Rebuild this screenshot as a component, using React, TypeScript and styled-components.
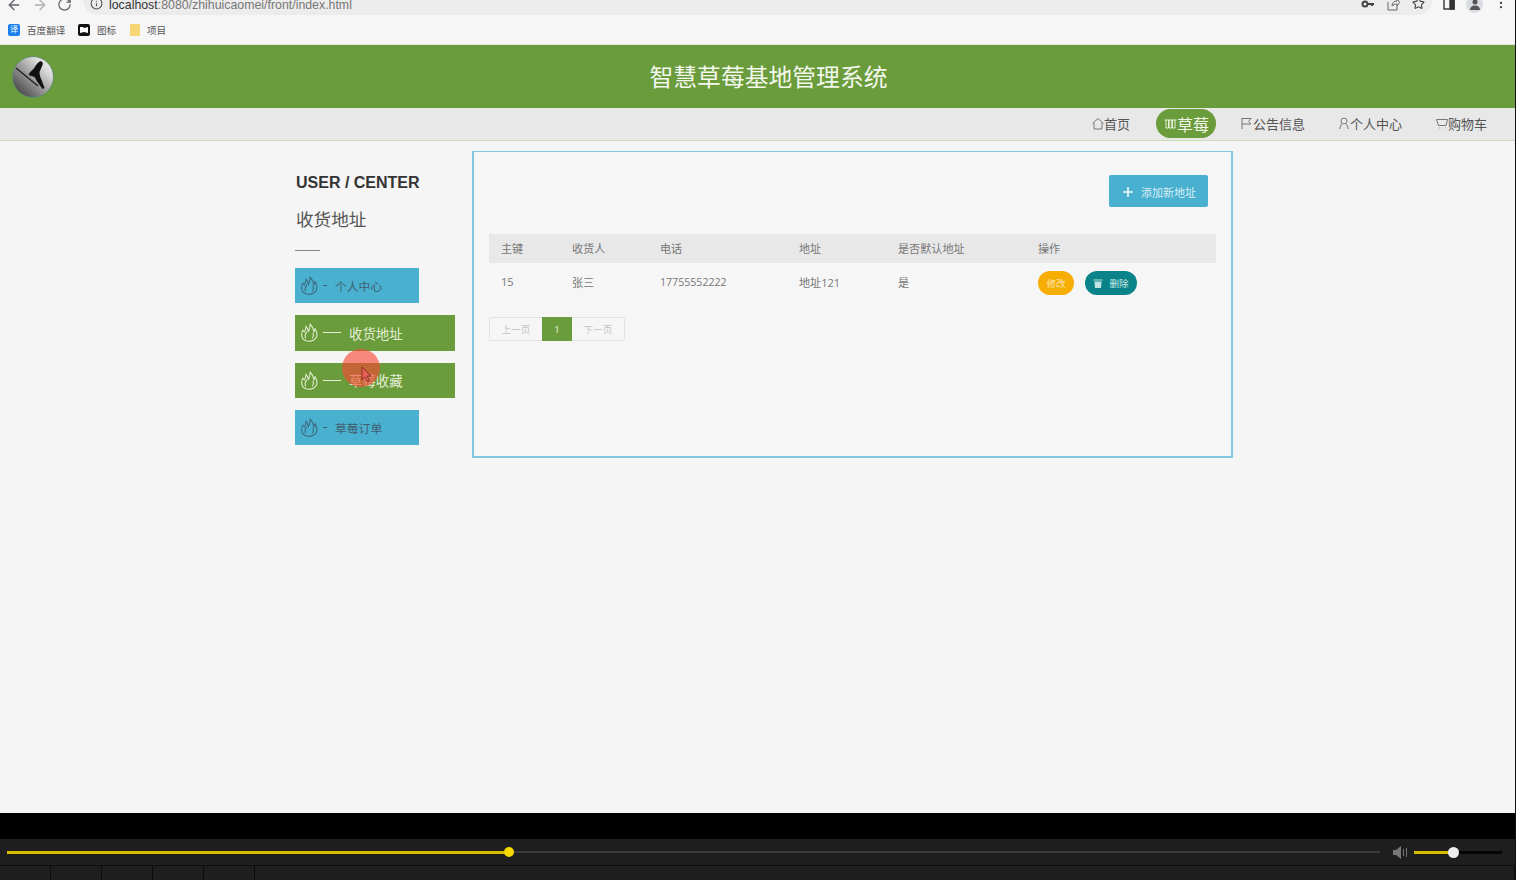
import React from "react";
import styled, { createGlobalStyle } from "styled-components";
import { ArrowLeft, ArrowRight, RotateCw, Info, Star, MoreVertical } from "lucide-react";

const Global = createGlobalStyle`
  html, body { margin: 0; padding: 0; background: #f5f5f5; }
  body { font-family: "Liberation Sans", "Noto Sans CJK SC", sans-serif; }
  * { box-sizing: border-box; }
`;

const Page = styled.div`
  width: 1516px; height: 880px; display: flex; flex-direction: column;
  overflow: hidden; background: #f5f5f5; border-right: 1px solid #111;
  position: relative;
`;
const Chrome = styled.div`height: 45px; background: #f7f6f7; border-bottom: 1px solid #e3e5e0; flex: none;`;
const Toolbar = styled.div`height: 15px; display: flex; overflow: hidden; color: #555;`;
const ToolIcons = styled.div`
  display: flex; width: 83px; flex: none; gap: 9.5px; padding-left: 6px; margin-top: -3px; align-items: flex-start;
  color: #5f6368;
`;
const UrlBar = styled.div`
  width: 1349px; height: 15px; flex: none; background: #ececec; border-radius: 0 0 15px 15px;
  display: flex; align-items: flex-start; padding-left: 7px; overflow: hidden; position: relative;
`;
const UrlText = styled.span`font-size: 12.35px; line-height: 10px; color: #777; margin-left: 6px; white-space: nowrap; b { font-weight: 400; color: #333; }`;
const UrlIcons = styled.div`margin-left: auto; display: flex; gap: 12px; padding-right: 7px; margin-top: -3px; color: #555;`;
const SideIcons = styled.div`display: flex; gap: 11px; margin-left: 11px; margin-top: -4px; color: #444; align-items: flex-start;`;
const Avatar = styled.div`width: 17px; height: 17px; border-radius: 50%; background: #d9dce3; display: flex; justify-content: center; align-items: center;`;

const Bookmarks = styled.div`height: 29px; display: flex; align-items: center; padding-left: 8px;`;
const Bookmark = styled.div<{ $w: number }>`
  width: ${p => p.$w}px; display: flex; align-items: center; gap: 7px; font-size: 9.6px; color: #555; white-space: nowrap;
`;
const BmBlue = styled.span`width: 12px; height: 12px; border-radius: 2px; background: #1b7ff0; color: #fff; font-size: 8px; line-height: 12px; text-align: center;`;

const Header = styled.header`
  height: 63px; flex: none; background: #6a9c3b; display: flex; align-items: center; padding: 0 32px 0 12px;
`;
const Title = styled.h1`
  flex: 1; margin: 0; padding-bottom: 2px; text-align: center; color: #f3f7ee; font-size: 23.8px; font-weight: 400; line-height: 32px;
  font-family: "Noto Sans CJK SC", sans-serif;
`;
const Nav = styled.nav`
  height: 33px; flex: none; background: #e8e8e8; border-bottom: 1px solid #c7dcb0; padding-bottom: 1px;
  display: flex; justify-content: flex-end; align-items: center; padding-right: 28px;
  font-family: "Noto Sans CJK SC", sans-serif;
`;
const NavItem = styled.div<{ $ml: number; $active?: boolean }>`
  margin-left: ${p => p.$ml}px; display: flex; align-items: center; white-space: nowrap;
  font-size: ${p => (p.$active ? 16 : 13)}px; color: ${p => (p.$active ? "#f1f6e9" : "#555")};
  ${p => p.$active && `background:#6a9c3b;border-radius:15px;height:29px;width:60px;padding-left:8px;`}
  svg { flex: none; }
`;

const Main = styled.main`flex: 1; display: flex; align-items: flex-start; padding: 10px 0 0 295px; min-height: 0;`;
const Side = styled.aside`width: 177px; flex: none; padding-top: 22px;`;
const SideHead = styled.div`font-size: 16px; line-height: 19px; font-weight: 700; color: #333; white-space: nowrap; padding-left: 1px;`;
const SideTitle = styled.div`font-size: 17.6px; line-height: 26px; color: #555; margin-top: 14px; padding-left: 1px; font-family: "Noto Sans CJK SC", sans-serif;`;
const SideRule = styled.div`width: 25px; height: 1px; background: #888; margin: 18px 0 17px;`;
const SideMenu = styled.div`display: flex; flex-direction: column; gap: 12px; align-items: flex-start;`;
const SideBtn = styled.div<{ $on?: boolean }>`
  height: 35.33px; width: ${p => (p.$on ? 159.5 : 124)}px; background: ${p => (p.$on ? "#6a9c3b" : "#4ab0cf")};
  color: ${p => (p.$on ? "#e4eed7" : "#3f5f70")}; display: flex; align-items: center; padding-left: 5px;
  font-family: "Noto Sans CJK SC", sans-serif; white-space: nowrap;
  font-size: ${p => (p.$on ? 13.4 : 11.8)}px;
`;
const Dash = styled.span<{ $on?: boolean }>`
  width: ${p => (p.$on ? 18 : 4)}px; height: 1px; background: currentColor; flex: none; margin: 0 8px 0 5px;
`;

const Panel = styled.section`
  width: 761px; height: 307px; flex: none; background: #f6f6f6; border: 2px solid #7fc8e0; border-top-width: 1.5px;
  padding: 23px 15px 0 15px;
`;
const PanelTop = styled.div`display: flex; justify-content: flex-end; padding-right: 8px;`;
const AddBtn = styled.div`
  width: 99px; height: 32px; background: #4ab0cf; border-radius: 2px; color: #d9eff5; display: flex; align-items: center;
  padding: 1px 0 0 13px; gap: 7px; font-size: 11px; font-family: "Noto Sans CJK SC", sans-serif;
`;
const Table = styled.table`
  width: 727px; table-layout: fixed; border-collapse: collapse; margin-top: 27px;
  font-size: 11.1px; color: #777; font-family: "Open Sans", "Noto Sans CJK SC", sans-serif;
`;
const Th = styled.th<{ $w?: number }>`
  ${p => p.$w && `width:${p.$w}px;`} height: 29px; padding: 0 0 2px 12px; background: #e8e8e8; text-align: left; font-weight: 400;
`;
const Td = styled.td`height: 40px; padding: 0 0 3px 12px;`;
const Phone = styled.span`font-size: 10.6px;`;
const Actions = styled.div`display: flex; align-items: center; gap: 11px; margin-top: 2px;`;
const Pill = styled.span<{ $kind: "edit" | "del" }>`
  height: 24px; border-radius: 12px; display: inline-flex; align-items: center; justify-content: center; gap: 6px; font-size: 9.6px;
  width: ${p => (p.$kind === "edit" ? 36 : 52)}px;
  background: ${p => (p.$kind === "edit" ? "#f6ae05" : "#0a8489")};
  color: ${p => (p.$kind === "edit" ? "#fbe6b0" : "#c9e8e6")};
`;
const Pager = styled.div`display: flex; margin-top: 14px; height: 24px; width: 136px;`;
const PageBtn = styled.div<{ $on?: boolean; $w: number; $side?: "l" | "r" }>`
  width: ${p => p.$w}px; display: flex; align-items: center; justify-content: center; font-size: 9.6px;
  font-family: "Open Sans", "Noto Sans CJK SC", sans-serif;
  color: ${p => (p.$on ? "#eef5dc" : "#c4c4c4")}; background: ${p => (p.$on ? "#6a9c3b" : "#f6f6f6")};
  ${p => !p.$on && `border: 1px solid #e4e4e4;`}
  ${p => p.$side === "l" && `border-right: 0; border-radius: 2px 0 0 2px;`}
  ${p => p.$side === "r" && `border-left: 0; border-radius: 0 2px 2px 0;`}
`;

const Player = styled.footer`height: 67px; flex: none; background: #000; padding-top: 26px;`;
const TrackRow = styled.div`height: 26px; background: #1e1e1e; display: flex; align-items: center; padding-left: 7px;`;
const Line = styled.div<{ $w: number; $c: string; $h?: number; $ml?: number }>`
  width: ${p => p.$w}px; height: ${p => p.$h ?? 2}px; background: ${p => p.$c}; flex: none; margin-left: ${p => p.$ml ?? 0}px;
`;
const Knob = styled.div<{ $c: string; $s: number }>`
  width: ${p => p.$s}px; height: ${p => p.$s}px; border-radius: 50%; background: ${p => p.$c}; flex: none; margin: 0 -${p => p.$s / 2}px; position: relative;
`;
const Cells = styled.div`height: 15px; background: #1e1e1e; border-top: 1px solid #0c0c0c; display: flex;`;
const Cell = styled.div<{ $w: number; $auto?: boolean }>`
  width: ${p => p.$w}px; border-right: 1px solid #0c0c0c; flex: none; ${p => p.$auto && `margin-left:auto;`}
`;
const Cursor = styled.div`
  position: absolute; left: 342px; top: 349px; width: 38px; height: 38px; border-radius: 50%; background: rgba(250,70,50,.62);
`;
const Arrow = styled.svg`position: absolute; left: 361px; top: 366px;`;

const Flame = ({ c }: { c: string }) => (
  <svg width="18" height="19" viewBox="0 0 18 19" fill="none" stroke={c} strokeWidth="1.1" strokeLinejoin="round" strokeLinecap="round" style={{ flex: "none" }}>
    <path d="M3 7C.8 11 1 15.500 5 17.500c3 1.300 8 1 10.500-1.800C17.800 13 17 9 15 5.500L14 9C13.500 6 12 3 10 1c.3 3-.3 5-1.500 7.500C8 6.500 7 4.500 6 3c.2 2-.5 4-1.500 6Z" />
    <path d="M5.500 15c-1-2.500 0-4.500 1.500-6M12.500 15c1-1.500 1-3.500.5-5" />
  </svg>
);
const ni = { fill: "none", stroke: "#777", strokeWidth: 1 } as const;
const HomeI = () => <svg width="12" height="13" viewBox="0 0 12 13" {...ni}><path d="M.5 6.500 6 1.500l5.500 5M2 5.500v6.500h8V5.500" /></svg>;
const GridI = () => <svg width="13" height="13" viewBox="0 0 13 13" fill="none" stroke="#e6f0d6"><path d="M.5 3h12M2 3v8h2.500V3M5.200 3v8h2.600V3M8.500 3v8H11V3" /></svg>;
const FlagI = () => <svg width="12" height="13" viewBox="0 0 12 13" {...ni}><path d="M1 1v11M1 1.500h9L7.500 4.500 10 7H1" /></svg>;
const UserI = () => <svg width="12" height="13" viewBox="0 0 12 13" {...ni}><circle cx="6" cy="4" r="3" /><path d="M1.500 12 3.500 7M10.500 12 8.500 7" /></svg>;
const CartI = () => <svg width="12" height="13" viewBox="0 0 12 13" {...ni}><path d="M.5 2.500h11L10 8.500H2.500ZM3 11h.6M9 11h.6" /></svg>;

const Logo = () => (
  <svg width="42" height="42" viewBox="0 0 42 42" style={{ flex: "none" }}>
    <defs>
      <linearGradient id="lg" x1="0" y1="1" x2="1" y2="0">
        <stop offset="0" stopColor="#2a2a2a" /><stop offset=".4" stopColor="#8a8a8a" /><stop offset=".75" stopColor="#dcdcdc" /><stop offset="1" stopColor="#f0f0f0" />
      </linearGradient>
    </defs>
    <circle cx="21" cy="21" r="20.500" fill="url(#lg)" stroke="#5c8f6a" strokeWidth="1" />
    <path d="M4 12 26 30" stroke="#222" strokeWidth="1.500" />
    <path d="M28 5c2 0 3.500 2 2.500 4l-3 7c0 3 1 6 2 8l3 8-2 1-5-7-3-5-6-2c1-3 3-4 5-6 2-3 4-7 7.500-8Z" fill="#111" />
  </svg>
);

export default function App() {
  return (
    <Page>
      <Global />
      <Chrome>
        <Toolbar>
          <ToolIcons>
            <ArrowLeft size={16} />
            <ArrowRight size={16} color="#b0b0b0" />
            <RotateCw size={15} />
          </ToolIcons>
          <UrlBar>
            <span style={{ marginTop: -3, display: "flex" }}><Info size={13} color="#555" /></span>
            <UrlText><b>localhost</b>:8080/zhihuicaomei/front/index.html</UrlText>
            <UrlIcons>
              <svg width="14" height="14" viewBox="0 0 14 14" fill="none" stroke="#444" strokeWidth="2"><circle cx="4" cy="7" r="2.500" /><path d="M6.500 7H13M11 7v2" /></svg>
              <svg width="13" height="14" viewBox="0 0 13 14" fill="none" stroke="#666"><path d="M1 5v8h9V9M5 9c0-3 2-5 5-5V1.500L12.500 5.500 10 9V7C8 7 6 8 5 9Z" /></svg>
              <Star size={13} color="#444" />
            </UrlIcons>
          </UrlBar>
          <SideIcons>
            <svg width="12" height="14" viewBox="0 0 12 14" fill="none" stroke="#333" strokeWidth="1.400"><rect x="1" y="1" width="10" height="12" /><rect x="7" y="1" width="4" height="12" fill="#333" /></svg>
            <Avatar><svg width="10" height="11" viewBox="0 0 10 11" fill="#555"><circle cx="5" cy="3" r="2.500" /><path d="M0 11c0-3 2-4.500 5-4.500s5 1.500 5 4.500Z" /></svg></Avatar>
            <MoreVertical size={14} color="#444" />
          </SideIcons>
        </Toolbar>
        <Bookmarks>
          <Bookmark $w={70}><BmBlue>译</BmBlue>百度翻译</Bookmark>
          <Bookmark $w={52}>
            <svg width="12" height="12" viewBox="0 0 12 12"><rect width="12" height="12" rx="2" fill="#111" /><path d="M2 3h3l1 1 4-1v6L6 8 2 9Z" fill="#fff" /></svg>
            图标
          </Bookmark>
          <Bookmark $w={60}>
            <svg width="10" height="12" viewBox="0 0 10 12"><path d="M0 1c0-.5.500-1 1-1h7.500c.8 0 1.500.7 1.500 1.500V12H0Z" fill="#f7d774" /></svg>
            项目
          </Bookmark>
        </Bookmarks>
      </Chrome>
      <Header>
        <Logo />
        <Title>智慧草莓基地管理系统</Title>
      </Header>
      <Nav>
        <NavItem $ml={0}><HomeI />首页</NavItem>
        <NavItem $ml={26} $active><GridI />草莓</NavItem>
        <NavItem $ml={25}><FlagI />公告信息</NavItem>
        <NavItem $ml={33}><UserI />个人中心</NavItem>
        <NavItem $ml={34}><CartI />购物车</NavItem>
      </Nav>
      <Main>
        <Side>
          <SideHead>USER / CENTER</SideHead>
          <SideTitle>收货地址</SideTitle>
          <SideRule />
          <SideMenu>
            <SideBtn><Flame c="#3d6b80" /><Dash />个人中心</SideBtn>
            <SideBtn $on><Flame c="#dfeacb" /><Dash $on />收货地址</SideBtn>
            <SideBtn $on><Flame c="#dfeacb" /><Dash $on />草莓收藏</SideBtn>
            <SideBtn><Flame c="#3d6b80" /><Dash />草莓订单</SideBtn>
          </SideMenu>
        </Side>
        <Panel>
          <PanelTop>
            <AddBtn>
              <svg width="12" height="12" viewBox="0 0 12 12" stroke="#f2fafc" strokeWidth="1.600"><path d="M6 1v10M1 6h10" /></svg>
              添加新地址
            </AddBtn>
          </PanelTop>
          <Table>
            <thead>
              <tr>
                <Th $w={71}>主键</Th><Th $w={88}>收货人</Th><Th $w={139}>电话</Th><Th $w={99}>地址</Th><Th $w={140}>是否默认地址</Th><Th>操作</Th>
              </tr>
            </thead>
            <tbody>
              <tr>
                <Td>15</Td><Td>张三</Td><Td><Phone>17755552222</Phone></Td><Td>地址121</Td><Td>是</Td>
                <Td>
                  <Actions>
                    <Pill $kind="edit">修改</Pill>
                    <Pill $kind="del">
                      <svg width="10" height="10" viewBox="0 0 10 10" fill="#bfe5e2"><path d="M.5 1.500h9v1h-9ZM1.500 3.500h7L8 10H2Z" /></svg>
                      删除
                    </Pill>
                  </Actions>
                </Td>
              </tr>
            </tbody>
          </Table>
          <Pager>
            <PageBtn $w={53} $side="l">上一页</PageBtn>
            <PageBtn $w={30} $on>1</PageBtn>
            <PageBtn $w={53} $side="r">下一页</PageBtn>
          </Pager>
        </Panel>
      </Main>
      <Player>
        <TrackRow>
          <Line $w={502} $c="#d8bd00" $h={3} />
          <Knob $c="#f5d800" $s={10} />
          <Line $w={871} $c="#3a3a3a" />
          <svg width="15" height="13" viewBox="0 0 15 13" fill="#777" style={{ marginLeft: 13, flex: "none" }}><path d="M0 4h3l5-4v13L3 9H0Z" /><path d="M10 3h1v7h-1ZM13 2h1v9h-1Z" /></svg>
          <Line $w={39} $c="#d8bd00" $h={3} $ml={6} />
          <Knob $c="#eee" $s={11} />
          <Line $w={49} $c="#050505" $h={3} />
        </TrackRow>
        <Cells>
          <Cell $w={51} /><Cell $w={51} /><Cell $w={51} /><Cell $w={51} /><Cell $w={51} />
          <Cell $w={51} $auto />
        </Cells>
      </Player>
      <Cursor />
      <Arrow width="12" height="18" viewBox="0 0 12 18"><path d="M1 1v13l3-3 2.500 5 2-1-2.500-5h4Z" fill="#e9605a" stroke="#7a2020" strokeWidth=".8" /></Arrow>
    </Page>
  );
}
